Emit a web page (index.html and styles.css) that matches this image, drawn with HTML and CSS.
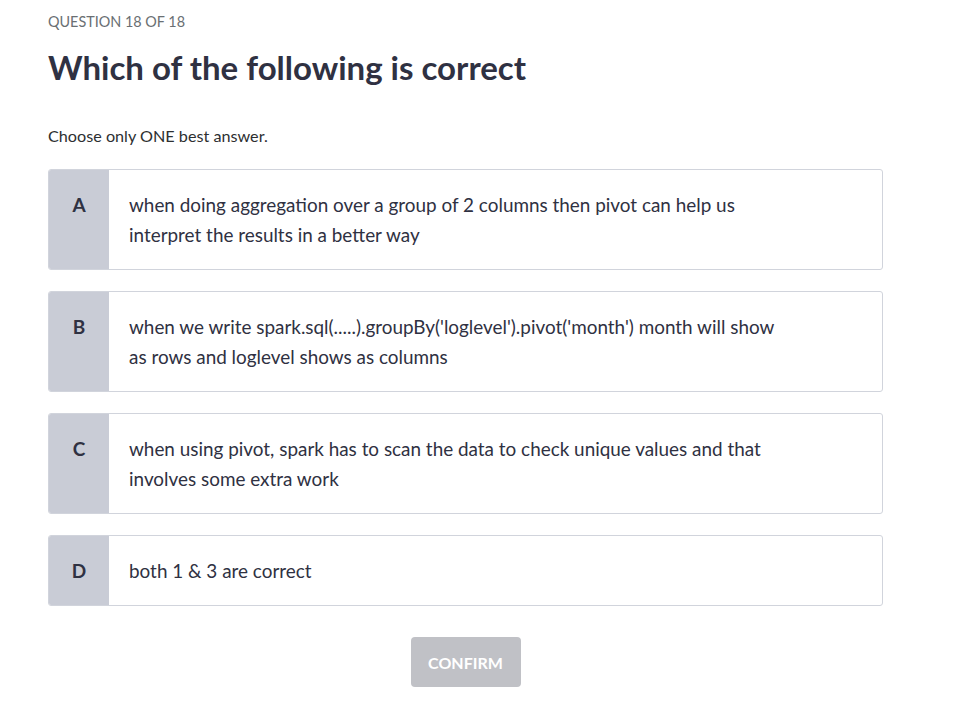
FILE: index.html
```html
<!DOCTYPE html>
<html>
<head>
<meta charset="utf-8">
<link rel="stylesheet" href="styles.css">
</head>
<body>
<main class="quiz">
  <div class="counter">QUESTION 18 OF 18</div>
  <h1 class="title">Which of the following is correct</h1>
  <p class="hint">Choose only ONE best answer.</p>
  <div class="options">
    <div class="option"><div class="letter">A</div><div class="text">when doing aggregation over a group of 2 columns then pivot can help us<br>interpret the results in a better way</div></div>
    <div class="option"><div class="letter">B</div><div class="text">when we write spark.sql(.....).groupBy('loglevel').pivot('month') month will show<br>as rows and loglevel shows as columns</div></div>
    <div class="option"><div class="letter">C</div><div class="text">when using pivot, spark has to scan the data to check unique values and that<br>involves some extra work</div></div>
    <div class="option"><div class="letter">D</div><div class="text">both 1 &amp; 3 are correct</div></div>
  </div>
  <div class="actions"><button class="confirm">CONFIRM</button></div>
</main>
</body>
</html>
```
FILE: styles.css
```css
html, body { margin: 0; padding: 0; background: #fff; }
body { font-family: Lato, "Liberation Sans", sans-serif; color: #2d2f3e; }
.quiz { width: 835px; padding: 13px 0 0 48px; }
.counter { font-size: 14.4px; line-height: 18px; color: #6a6f73; }
.title { margin: 14px 0 0; font-size: 33px; line-height: 44px; font-weight: 700; color: #2f3142; }
.hint { margin: 36px 0 0; font-size: 16.2px; line-height: 22px; color: #2d2f31; }
.options { margin-top: 22px; display: flex; flex-direction: column; gap: 21px; }
.option { display: flex; border: 1px solid #d1d4dc; border-radius: 3px; overflow: hidden; }
.letter { width: 60px; flex: none; background: #c9ccd6; text-align: center; font-weight: 700; font-size: 19px; line-height: 30px; padding: 20px 0 19px; color: #2f3142; }
.text { padding: 20px 20px 19px; font-size: 18.9px; line-height: 30px; color: #2f3142; }
.actions { display: flex; justify-content: center; margin-top: 31px; }
.confirm { width: 110px; height: 50px; border: none; border-radius: 4px; background: #c0c1c6; color: #fff; font-family: inherit; font-weight: 700; font-size: 16px; }
```
